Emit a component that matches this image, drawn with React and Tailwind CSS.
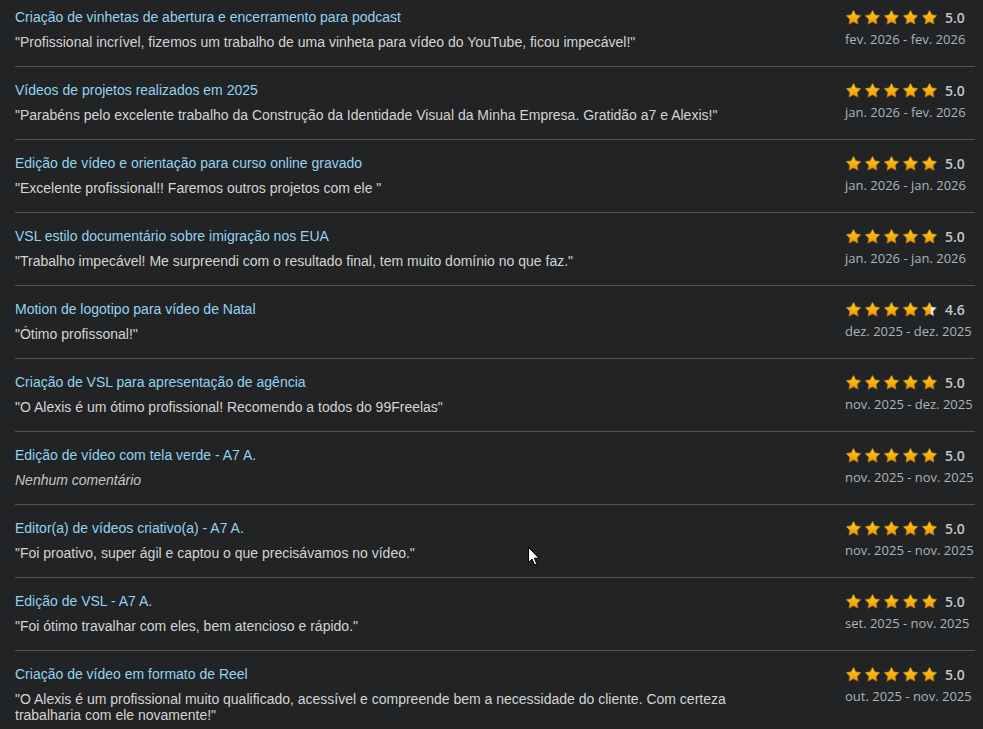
import React from "react";

const items = [
  { t: "Criação de vinhetas de abertura e encerramento para podcast", c: "\"Profissional incrível, fizemos um trabalho de uma vinheta para vídeo do YouTube, ficou impecável!\"", r: 5.0, d: "fev. 2026 - fev. 2026" },
  { t: "Vídeos de projetos realizados em 2025", c: "\"Parabéns pelo excelente trabalho da Construção da Identidade Visual da Minha Empresa. Gratidão a7 e Alexis!\"", r: 5.0, d: "jan. 2026 - fev. 2026" },
  { t: "Edição de vídeo e orientação para curso online gravado", c: "\"Excelente profissional!! Faremos outros projetos com ele \"", r: 5.0, d: "jan. 2026 - jan. 2026" },
  { t: "VSL estilo documentário sobre imigração nos EUA", c: "\"Trabalho impecável! Me surpreendi com o resultado final, tem muito domínio no que faz.\"", r: 5.0, d: "jan. 2026 - jan. 2026" },
  { t: "Motion de logotipo para vídeo de Natal", c: "\"Ótimo profissonal!\"", r: 4.6, d: "dez. 2025 - dez. 2025" },
  { t: "Criação de VSL para apresentação de agência", c: "\"O Alexis é um ótimo profissional! Recomendo a todos do 99Freelas\"", r: 5.0, d: "nov. 2025 - dez. 2025" },
  { t: "Edição de vídeo com tela verde - A7 A.", c: null, r: 5.0, d: "nov. 2025 - nov. 2025" },
  { t: "Editor(a) de vídeos criativo(a) - A7 A.", c: "\"Foi proativo, super ágil e captou o que precisávamos no vídeo.\"", r: 5.0, d: "nov. 2025 - nov. 2025" },
  { t: "Edição de VSL - A7 A.", c: "\"Foi ótimo travalhar com eles, bem atencioso e rápido.\"", r: 5.0, d: "set. 2025 - nov. 2025" },
  { t: "Criação de vídeo em formato de Reel", c: "\"O Alexis é um profissional muito qualificado, acessível e compreende bem a necessidade do cliente. Com certeza trabalharia com ele novamente!\"", r: 5.0, d: "out. 2025 - nov. 2025" },
];

const STAR = "M12 1.6l3.2 6.6 7.2 1-5.2 5.1 1.25 7.2L12 18.1l-6.45 3.4 1.25-7.2L1.6 9.2l7.2-1z";

function Star({ fill, id }) {
  return (
    <svg width="17" height="17" viewBox="0 0 24 24" className="block">
      <defs>
        <linearGradient id={`g${id}`} x1="0" y1="0" x2="0" y2="1">
          <stop offset="0%" stopColor="#ffd21a" />
          <stop offset="100%" stopColor="#f29400" />
        </linearGradient>
        <clipPath id={`c${id}`}>
          <rect x="0" y="0" width={24 * fill} height="24" />
        </clipPath>
      </defs>
      <path d={STAR} fill="#f2f2f2" stroke="#5a4a30" strokeWidth="0.8" strokeLinejoin="round" />
      <path d={STAR} fill={`url(#g${id})`} stroke="#8a5a00" strokeWidth="0.8" strokeLinejoin="round" clipPath={`url(#c${id})`} />
    </svg>
  );
}

function Stars({ r, idx }) {
  return (
    <div className="flex gap-[2px]">
      {[0, 1, 2, 3, 4].map((i) => {
        const f = Math.max(0, Math.min(1, r - i));
        const fill = f >= 1 ? 1 : f > 0 ? 0.58 : 0;
        return <Star key={i} fill={fill} id={`${idx}-${i}`} />;
      })}
    </div>
  );
}

export default function App() {
  return (
    <div className="relative h-[729px] w-[983px] overflow-hidden bg-[#222324]">
      <div className="-mt-[6px] ml-[15px] mr-[8px]">
        {items.map((it, idx) => (
          <div
            key={idx}
            className={`flex pt-[15px] pb-[16px] ${idx > 0 ? "border-t border-[#545556]" : ""}`}
          >
            <div className="min-w-0 flex-1 pr-[40px] font-['Liberation_Sans',Arial,sans-serif] text-[14px] leading-[16px]">
              <div className="w-[770px] text-[#92d3f1]">{it.t}</div>
              {it.c ? (
                <div className="mt-[9px] w-[770px] text-[#d4d4d4]">{it.c}</div>
              ) : (
                <div className="mt-[9px] italic text-[#c6c6c6]">Nenhum comentário</div>
              )}
            </div>
            <div className="flex w-[130px] shrink-0 flex-col font-['Open_Sans','Noto_Sans',sans-serif]">
              <div className="flex items-center gap-[7px]">
                <Stars r={it.r} idx={idx} />
                <span className="text-[14px] font-semibold leading-[16px] text-[#c4c6c8]">{it.r.toFixed(1)}</span>
              </div>
              <div className="mt-[5px] whitespace-nowrap text-[13px] leading-[16px] text-[#aab4bd]">{it.d}</div>
            </div>
          </div>
        ))}
      </div>
      <svg className="absolute left-[528px] top-[547px]" width="12" height="19" viewBox="0 0 12 19">
        <path d="M0.5 0.5 L0.5 15.5 L4 12 L6.5 18 L8.8 17 L6.4 11.2 L11 11.2 Z" fill="#fff" stroke="#000" strokeWidth="1" strokeLinejoin="miter" />
      </svg>
    </div>
  );
}
